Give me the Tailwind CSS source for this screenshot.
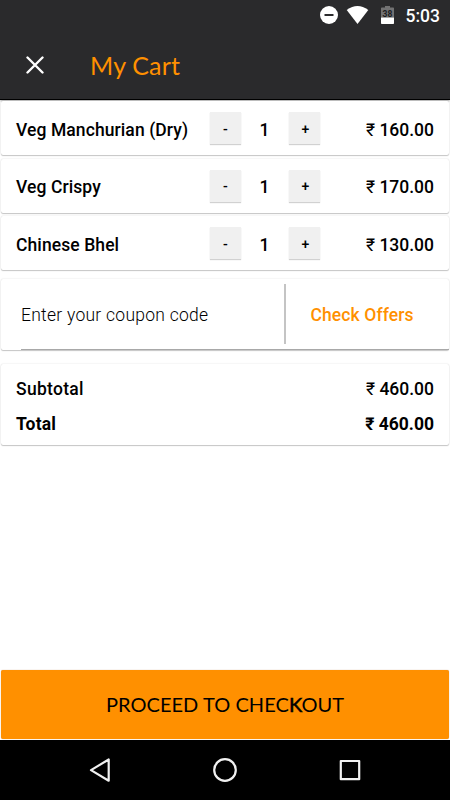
<!DOCTYPE html>
<html lang="en">
<head>
<meta charset="utf-8">
<title>My Cart</title>
<script src="https://cdn.jsdelivr.net/npm/@tailwindcss/browser@4"></script>
</head>
<body class="bg-white">
<div class="flex h-[800px] w-[450px] flex-col overflow-hidden bg-white font-['Roboto','Noto_Sans',sans-serif] text-[17.5px] leading-6 font-medium text-black">
  <header class="h-[100px] shrink-0 border-b border-black bg-[#2a2a2c] shadow-[0_1px_2px_rgba(0,0,0,0.35)]">
    <div class="flex h-[31px] items-center justify-end pr-[10px] text-white">
      <svg class="mr-[8px]" width="19" height="19" viewBox="0 0 19 19"><circle cx="10" cy="9" r="9" fill="#fff"/><path d="M5.5 9h9" stroke="#2a2a2c" stroke-width="2"/></svg>
      <svg class="mr-[12px]" width="23" height="19" viewBox="0 0 23 19"><path d="M.7 3.9Q11.5-3.7 22.3 3.9L11.5 18Z" fill="#fff"/></svg>
      <svg class="mr-[12px]" width="13" height="19" viewBox="0 0 13 19"><path d="M4 0h5v1.5h3.2q.8 0 .8.8V11.5H0V2.3Q0 1.5.8 1.5H4Z" fill="#727273"/><path d="M0 11.5h13v5.7q0 .8-.8.8H.8q-.8 0-.8-.8Z" fill="#fff"/><text x="6.5" y="11.3" text-anchor="middle" font-size="8.5" font-weight="700" fill="#1d1d1f">38</text></svg>
      <span class="text-[17.5px]">5:03</span>
    </div>
    <div class="flex h-[68px] items-center">
      <svg class="ml-[26px]" width="18" height="18" viewBox="0 0 18 18"><path d="M1.5 1.5l15 15M16.5 1.5l-15 15" stroke="#fff" stroke-width="2.4" stroke-linecap="round"/></svg>
      <h1 class="ml-[46px] font-['Lato',sans-serif] text-[25px] leading-8 font-normal tracking-[0.2px] text-[#ff9000]">My Cart</h1>
    </div>
  </header>
  <main class="flex grow flex-col px-px pt-px">
    <section class="mb-[3.5px] flex h-[54px] shrink-0 items-center rounded-[2px] bg-white px-[15px] shadow-[0_1px_1px_rgba(0,0,0,0.2),0_0_1.5px_rgba(0,0,0,0.18)]">
      <span class="w-[194px] pt-[3px] tracking-[0.09px] whitespace-nowrap">Veg Manchurian (Dry)</span>
      <button class="h-[32px] w-[31px] bg-[#f0f0f0] pt-px text-[14px] shadow-[0_1px_1px_rgba(0,0,0,0.18)]">-</button>
      <span class="w-[47px] pt-[3px] text-center">1</span>
      <button class="ml-px h-[32px] w-[31px] bg-[#f0f0f0] pt-px pl-[2px] text-[14px] shadow-[0_1px_1px_rgba(0,0,0,0.18)]">+</button>
      <span class="grow pt-[3px] text-right whitespace-nowrap"><span class="font-normal">₹</span> 160.00</span>
    </section>
    <section class="mb-[3.5px] flex h-[54px] shrink-0 items-center rounded-[2px] bg-white px-[15px] shadow-[0_1px_1px_rgba(0,0,0,0.2),0_0_1.5px_rgba(0,0,0,0.18)]">
      <span class="w-[194px] pt-[3px] tracking-[0.09px] whitespace-nowrap">Veg Crispy</span>
      <button class="h-[32px] w-[31px] bg-[#f0f0f0] pt-px text-[14px] shadow-[0_1px_1px_rgba(0,0,0,0.18)]">-</button>
      <span class="w-[47px] pt-[3px] text-center">1</span>
      <button class="ml-px h-[32px] w-[31px] bg-[#f0f0f0] pt-px pl-[2px] text-[14px] shadow-[0_1px_1px_rgba(0,0,0,0.18)]">+</button>
      <span class="grow pt-[3px] text-right whitespace-nowrap"><span class="font-normal">₹</span> 170.00</span>
    </section>
    <section class="mb-[9px] flex h-[54px] shrink-0 items-center rounded-[2px] bg-white px-[15px] shadow-[0_1px_1px_rgba(0,0,0,0.2),0_0_1.5px_rgba(0,0,0,0.18)]">
      <span class="w-[194px] pt-[3px] tracking-[0.09px] whitespace-nowrap">Chinese Bhel</span>
      <button class="h-[32px] w-[31px] bg-[#f0f0f0] pt-px text-[14px] shadow-[0_1px_1px_rgba(0,0,0,0.18)]">-</button>
      <span class="w-[47px] pt-[3px] text-center">1</span>
      <button class="ml-px h-[32px] w-[31px] bg-[#f0f0f0] pt-px pl-[2px] text-[14px] shadow-[0_1px_1px_rgba(0,0,0,0.18)]">+</button>
      <span class="grow pt-[3px] text-right whitespace-nowrap"><span class="font-normal">₹</span> 130.00</span>
    </section>
    <section class="mb-[14px] h-[71px] shrink-0 rounded-[2px] bg-white pl-[20px] shadow-[0_1px_1px_rgba(0,0,0,0.2),0_0_1.5px_rgba(0,0,0,0.18)]">
      <div class="flex h-[71px] items-center border-b border-[#a8a8a8]">
        <span class="w-[263px] pt-[2px] font-light tracking-[0.26px] whitespace-nowrap">Enter your coupon code</span>
        <span class="h-[60px] w-[2px] bg-[#c4c4c4]"></span>
        <span class="ml-[24.5px] pt-[2px] tracking-[0.1px] whitespace-nowrap text-[#ff9000]">Check Offers</span>
      </div>
    </section>
    <section class="h-[81px] shrink-0 rounded-[2px] bg-white px-[15px] pt-[12.5px] shadow-[0_1px_1px_rgba(0,0,0,0.2),0_0_1.5px_rgba(0,0,0,0.18)]">
      <div class="mb-[11px] flex justify-between"><span class="tracking-[0.3px]">Subtotal</span><span><span class="font-normal">₹</span> 460.00</span></div>
      <div class="flex justify-between font-bold"><span class="tracking-[0.2px]">Total</span><span>₹ 460.00</span></div>
    </section>
  </main>
  <div class="h-[71px] shrink-0 px-px pt-px pb-px">
    <button class="h-[69px] w-full rounded-[2px] bg-[#ff9000] pb-[2px] font-['Lato',sans-serif] text-[20px] font-normal tracking-[0.06px] shadow-[0_0_1px_rgba(160,80,0,0.6)]">PROCEED TO CHEC<span class="[-webkit-text-stroke:0.5px_black]">K</span>OUT</button>
  </div>
  <nav class="flex h-[60px] shrink-0 items-center bg-black">
    <svg width="450" height="60" viewBox="0 0 450 60" fill="none" stroke="#f1f1f1" stroke-width="2.2" stroke-linejoin="round"><path d="M108.7 19.5v21.2L91 30.1Z"/><circle cx="225" cy="30" r="10.8"/><rect x="340.8" y="21" width="18.4" height="18.2"/></svg>
  </nav>
</div>
</body>
</html>
